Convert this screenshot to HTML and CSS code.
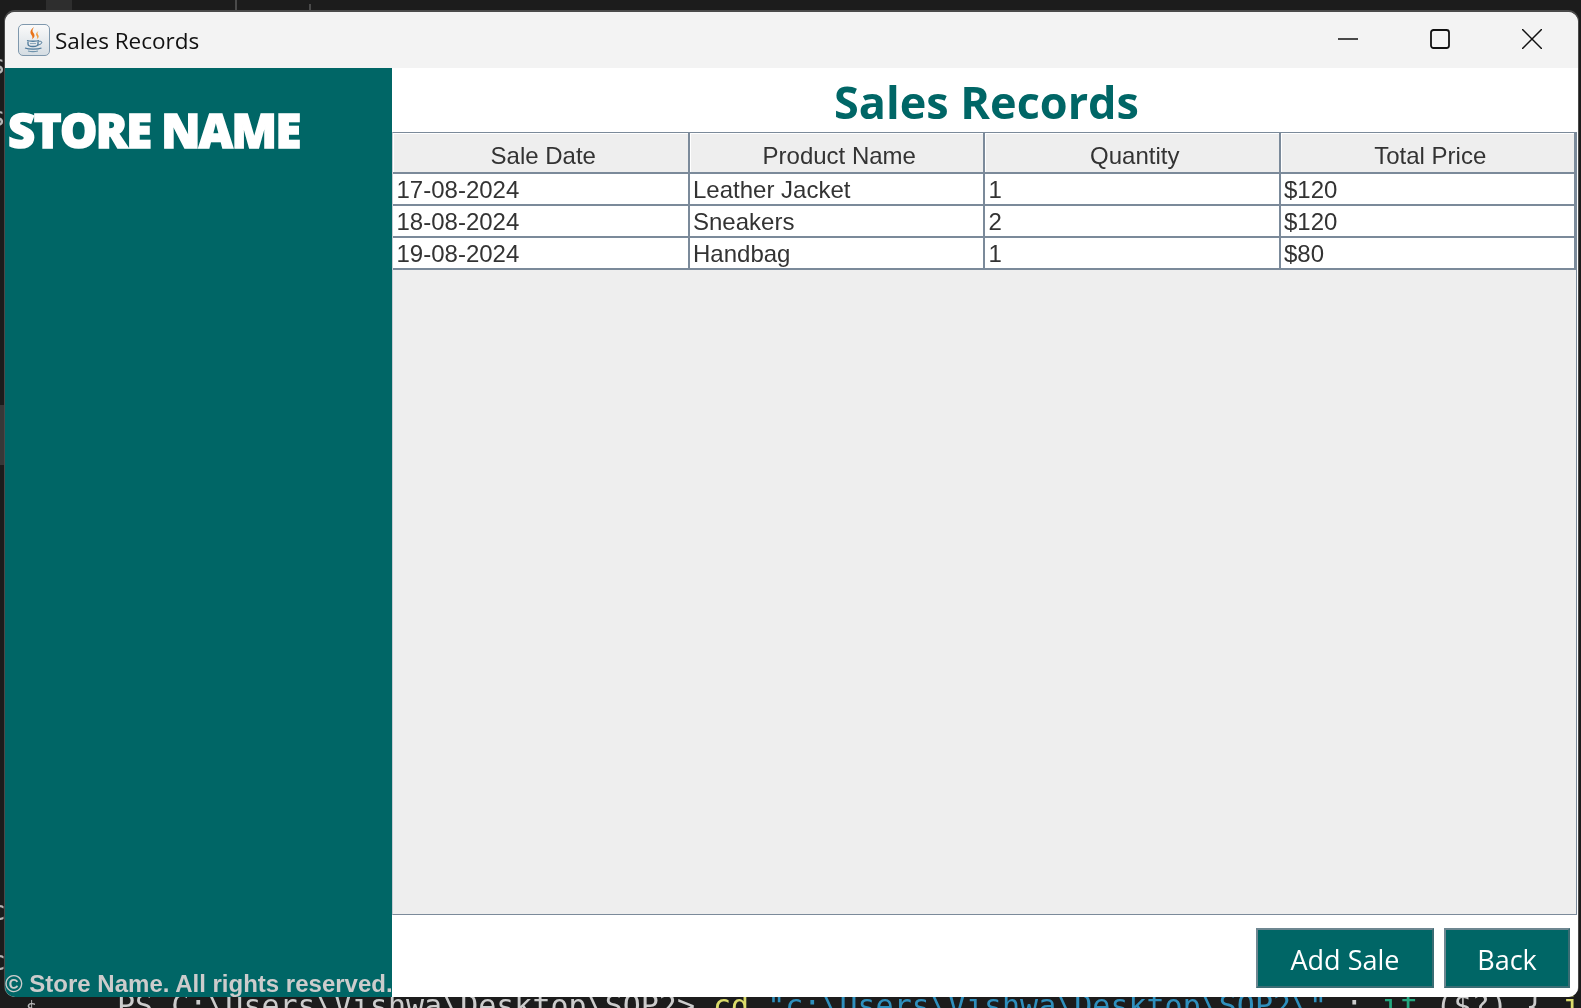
FILE: index.html
```html
<!DOCTYPE html>
<html lang="en">
<head>
    <meta charset="UTF-8">
    <title>Sales Records</title>
    <link rel="stylesheet" href="styles.css">
</head>
<body>
    <!-- editor behind the window -->
    <div class="desk">
        <div class="tab-bit"></div>
        <div class="tick tick-a"></div>
        <div class="tick tick-b"></div>
        <div class="rail-active"></div>
        <span class="edge-char edge-1">s</span>
        <span class="edge-char edge-2">s</span>
        <span class="edge-char edge-3">c</span>
        <span class="edge-char edge-4">c</span>
        <span class="prompt-mark">$</span>
        <div class="terminal">PS C:\Users\Vishwa\Desktop\SOP2&gt; <span class="t-yellow">cd</span> <span class="t-blue">"c:\Users\Vishwa\Desktop\SOP2\"</span> ; <span class="t-green">if</span> ($?) { <span class="t-yellow">j</span></div>
    </div>
    <div class="window">
        <div class="titlebar">
            <div class="app-icon">
                <svg width="30" height="30" viewBox="0 0 30 30">
                    <path d="M15 2c-3.500 3-4.500 5-2.500 8c1.200 1.800 1.200 3 .3 4.500c3.400-2.300 3.300-4.500 1.500-6.700c-1.300-1.700-.9-3.500 .7-5.800z" fill="#e8731a"/>
                    <path d="M19.500 6c-2.500 1.800-3 3.200-1.800 5c.8 1.200 .6 2.200 0 3.200c2.500-1.500 2.400-3.100 1.200-4.700c-.8-1.100-.5-2.100 .6-3.500z" fill="#f09a3c"/>
                    <path d="M8 15.500c2.500 1 9.500 1 12 0" fill="none" stroke="#4f7a9b" stroke-width="1.300"/>
                    <path d="M9 16.500v2.500c0 1.700 2 2.500 5 2.500s5-.8 5-2.500v-2.500" fill="none" stroke="#4f7a9b" stroke-width="1.300"/>
                    <path d="M11 18.500h6" stroke="#8fa9bd"/>
                    <path d="M19.500 16.500c2.500-.7 3.800 .3 3.200 1.500c-.5 1-2 1.700-3.700 2" fill="none" stroke="#4f7a9b"/>
                    <path d="M6 23c3.500 1.500 13 1.500 16.500 0" fill="none" stroke="#4f7a9b" stroke-width="1.200"/>
                    <path d="M9 26c2.500 .7 7.500 .7 10 0" fill="none" stroke="#6f93ac" stroke-width="1.200"/>
                </svg>
            </div>
            <span class="title-text">Sales Records</span>
            <div class="win-controls">
                <svg class="win-btn" width="20" height="20" viewBox="0 0 20 20"><path d="M0 10H20" stroke="#111" stroke-width="1.500"/></svg>
                <svg class="win-btn" width="20" height="20" viewBox="0 0 20 20"><rect x="1" y="1" width="18" height="18" rx="2.500" fill="none" stroke="#111" stroke-width="1.800"/></svg>
                <svg class="win-btn" width="20" height="20" viewBox="0 0 20 20"><path d="M0 0L20 20M20 0L0 20" stroke="#111" stroke-width="1.500"/></svg>
            </div>
        </div>
        <div class="content">
            <aside class="sidebar">
                <div class="store-name">Store Name</div>
                <div class="copyright">© Store Name. All rights reserved.</div>
            </aside>
            <main class="main">
                <h1 class="page-title">Sales Records</h1>
                <div class="table-panel">
                    <table class="records">
                        <thead>
                            <tr>
                                <th>Sale Date</th>
                                <th>Product Name</th>
                                <th>Quantity</th>
                                <th>Total Price</th>
                            </tr>
                        </thead>
                        <tbody>
                            <tr><td>17-08-2024</td><td>Leather Jacket</td><td>1</td><td>$120</td></tr>
                            <tr><td>18-08-2024</td><td>Sneakers</td><td>2</td><td>$120</td></tr>
                            <tr><td>19-08-2024</td><td>Handbag</td><td>1</td><td>$80</td></tr>
                        </tbody>
                    </table>
                </div>
                <div class="actions">
                    <button class="action add">Add Sale</button>
                    <button class="action back">Back</button>
                </div>
            </main>
        </div>
    </div>
</body>
</html>
```

FILE: styles.css
```css
html, body {
    height: 100%;
}
body {
    margin: 0;
    padding: 12px 3px 11px 5px;
    box-sizing: border-box;
    background-color: #1c1c1c;
    overflow: hidden;
    font-family: "Liberation Sans", Arial, sans-serif;
}
.desk {
    position: fixed;
    top: 0;
    left: 0;
    right: 0;
    bottom: 0;
    overflow: hidden;
}
.tab-bit {
    position: absolute;
    left: 46px;
    top: 0;
    width: 26px;
    height: 11px;
    background: #2e2e2e;
}
.tick {
    position: absolute;
    top: 0;
    width: 2px;
    background: #4a4a4a;
}
.tick-a { left: 235px; height: 11px; }
.tick-b { left: 309px; top: 4px; height: 7px; }
.rail-active {
    position: absolute;
    left: 0;
    top: 405px;
    width: 5px;
    height: 60px;
    background: #383838;
}
.edge-char {
    position: absolute;
    left: -10px;
    font-family: "DejaVu Sans Mono", monospace;
    font-size: 26px;
    line-height: 30px;
    color: #b5b5b5;
}
.edge-1 { top: 50px; }
.edge-2 { top: 102px; }
.edge-3 { top: 896px; }
.edge-4 { top: 946px; }
.prompt-mark {
    position: absolute;
    left: 26px;
    top: 998px;
    font-family: "DejaVu Sans Mono", monospace;
    font-size: 18px;
    line-height: 20px;
    color: #bbb;
}
.terminal {
    position: absolute;
    left: 117px;
    top: 988px;
    font-family: "DejaVu Sans Mono", monospace;
    font-size: 30px;
    line-height: 36px;
    color: #ccc;
    white-space: pre;
}
.t-yellow { color: #dcdc6b; }
.t-blue { color: #2e8fbd; }
.t-green { color: #23a77f; }
.window {
    position: relative;
    height: 100%;
    display: flex;
    flex-direction: column;
    background: #fff;
    border-radius: 10px;
    box-shadow: 0 -1px 0 1px #4a4a4a;
    overflow: hidden;
}
.titlebar {
    height: 56px;
    flex: none;
    display: flex;
    align-items: center;
    background-color: #f3f3f3;
    padding-left: 13px;
}
.app-icon {
    width: 30px;
    height: 30px;
    border: 1px solid #7f98ad;
    border-radius: 5px;
    background: linear-gradient(#fafafa, #d5dde3);
}
.title-text {
    margin-left: 5px;
    font-family: "Open Sans", sans-serif;
    font-size: 22.500px;
    color: #111;
}
.win-controls {
    margin-left: auto;
    display: flex;
    align-items: center;
    padding-right: 36px;
    gap: 72px;
    margin-top: -3px;
}
.content {
    flex: 1;
    display: flex;
    min-height: 0;
}
.sidebar {
    width: 387px;
    flex: none;
    background-color: #006666;
    display: flex;
    flex-direction: column;
    justify-content: space-between;
}
.store-name {
    margin-top: 32px;
    padding-left: 3px;
    font-family: "Open Sans", sans-serif;
    font-weight: 800;
    font-size: 47px;
    line-height: 60px;
    letter-spacing: -1.500px;
    -webkit-text-stroke: 1.500px #fff;
    color: #fff;
    text-transform: uppercase;
    white-space: nowrap;
}
.copyright {
    font-weight: bold;
    font-size: 24px;
    line-height: 26px;
    color: #cccccc;
    white-space: nowrap;
}
.main {
    flex: 1;
    min-width: 0;
    display: flex;
    flex-direction: column;
    background: #fff;
}
.page-title {
    margin: 0;
    height: 64px;
    flex: none;
    padding-left: 3px;
    text-align: center;
    font-family: "Open Sans", sans-serif;
    font-size: 45px;
    line-height: 68px;
    font-weight: 700;
    color: #006666;
}
.table-panel {
    flex: 1;
    min-height: 0;
    background-color: #eeeeee;
    border: 1px solid #7b8a9a;
    border-left-color: #c5cdd4;
    margin-right: 1px;
}
.records {
    width: 100%;
    table-layout: fixed;
    border-collapse: collapse;
    font-size: 24px;
    color: #333;
}
.records th {
    height: 33px;
    padding: 6px 0 0 6px;
    font-weight: normal;
    text-align: center;
    background-color: #eeeeee;
    box-shadow: inset 1px 1px 0 #fff;
    border-right: 2px solid #7b8a9a;
    border-bottom: 2px solid #7b8a9a;
}
.records td {
    height: 28px;
    padding: 2px 0 0 3.500px;
    background: #fff;
    border-right: 2px solid #7b8a9a;
    border-bottom: 2px solid #7b8a9a;
}
.actions {
    height: 69px;
    flex: none;
    display: flex;
    justify-content: flex-end;
    align-items: flex-start;
    gap: 10px;
    padding: 13px 8px 0 0;
}
.action {
    height: 60px;
    background-color: #006666;
    color: #fff;
    border: 2px solid #6e8791;
    border-bottom-color: #3a6d74;
    border-right-color: #3a6d74;
    font-family: "Open Sans", sans-serif;
    font-size: 27px;
    padding: 2px 0 0;
}
.add { width: 178px; }
.back { width: 126px; }
```
